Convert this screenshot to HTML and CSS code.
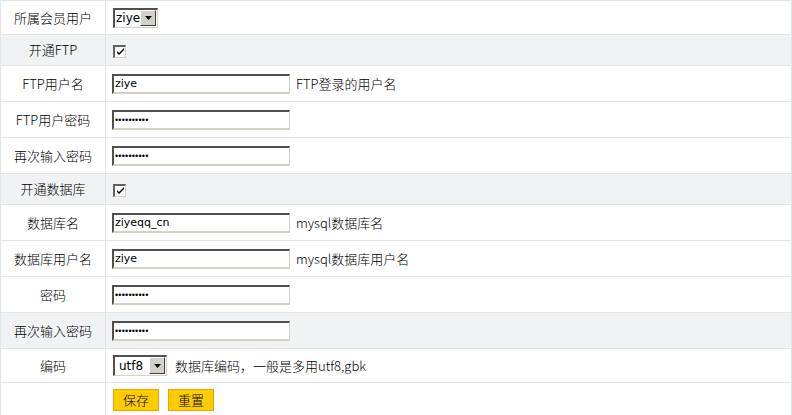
FILE: index.html
```html
<!DOCTYPE html>
<html lang="zh">
<head>
<meta charset="utf-8">
<title>FTP / 数据库设置</title>
<link rel="stylesheet" href="styles.css">
</head>
<body>
<form class="form">
<table class="grid">
  <colgroup><col class="col-label"><col></colgroup>
  <tr class="row-sel">
    <td class="label">所属会员用户</td>
    <td class="field">
      <span class="sel sel-user"><select><option>ziye</option></select><span class="arrow"><svg width="7" height="4" viewBox="0 0 7 4"><path d="M0 0h7L3.5 4z" fill="#000"/></svg></span></span>
    </td>
  </tr>
  <tr class="row-chk alt">
    <td class="label">开通FTP</td>
    <td class="field"><span class="chk"><svg width="9" height="9" viewBox="0 0 9 9"><path d="M1 4l2 2 5-5v2l-5 5-2-2z" fill="#000"/></svg></span></td>
  </tr>
  <tr class="row-inp">
    <td class="label">FTP用户名</td>
    <td class="field"><input class="txt" type="text" value="ziye"><span class="hint">FTP登录的用户名</span></td>
  </tr>
  <tr class="row-inp">
    <td class="label">FTP用户密码</td>
    <td class="field"><input class="txt pwd" type="password" value="ziyeqqcom1"></td>
  </tr>
  <tr class="row-inp">
    <td class="label">再次输入密码</td>
    <td class="field"><input class="txt pwd" type="password" value="ziyeqqcom1"></td>
  </tr>
  <tr class="row-chk alt">
    <td class="label">开通数据库</td>
    <td class="field"><span class="chk"><svg width="9" height="9" viewBox="0 0 9 9"><path d="M1 4l2 2 5-5v2l-5 5-2-2z" fill="#000"/></svg></span></td>
  </tr>
  <tr class="row-inp">
    <td class="label">数据库名</td>
    <td class="field"><input class="txt" type="text" value="ziyeqq_cn"><span class="hint">mysql数据库名</span></td>
  </tr>
  <tr class="row-inp">
    <td class="label">数据库用户名</td>
    <td class="field"><input class="txt" type="text" value="ziye"><span class="hint">mysql数据库用户名</span></td>
  </tr>
  <tr class="row-inp">
    <td class="label">密码</td>
    <td class="field"><input class="txt pwd" type="password" value="ziyeqqcom1"></td>
  </tr>
  <tr class="row-inp alt">
    <td class="label">再次输入密码</td>
    <td class="field"><input class="txt pwd" type="password" value="ziyeqqcom1"></td>
  </tr>
  <tr class="row-sel">
    <td class="label">编码</td>
    <td class="field">
      <span class="sel sel-enc"><select><option>utf8</option><option>gbk</option></select><span class="arrow"><svg width="7" height="4" viewBox="0 0 7 4"><path d="M0 0h7L3.5 4z" fill="#000"/></svg></span></span><span class="hint hint-enc">数据库编码，一般是多用utf8,gbk</span>
    </td>
  </tr>
  <tr class="row-btn">
    <td class="label"></td>
    <td class="field"><span class="btns"><button type="button" class="btn">保存</button><button type="reset" class="btn">重置</button></span></td>
  </tr>
</table>
</form>
</body>
</html>
```

FILE: styles.css
```css
html, body {
  margin: 0;
  padding: 0;
  background: #fff;
}
body {
  font-family: "Noto Sans CJK SC", "DejaVu Sans", sans-serif;
  font-size: 13px;
  font-weight: 300;
  color: #000;
  line-height: 16px;
}
.form { margin: 0; }
.grid {
  width: 792px;
  border-collapse: collapse;
  border: 1px solid #e1e4e8;
}
.col-label { width: 105px; }
.grid td {
  border: 1px solid #e1e4e8;
  padding: 0;
  vertical-align: middle;
}
.row-sel td { height: 33px; }
.row-chk td { height: 30px; }
.row-inp td { height: 35px; }
.row-btn td { height: 34px; }
.alt td { background: #f1f2f4; }
.label {
  text-align: center;
  white-space: nowrap;
}
.field {
  padding-left: 6px !important;
  white-space: nowrap;
}
.txt {
  box-sizing: border-box;
  width: 178px;
  height: 20px;
  margin: 0;
  padding: 0 1px;
  border-style: solid;
  border-width: 2px 1px 2px 2px;
  border-color: #505050 #d4d0c8 #d4d0c8 #505050;
  background: #fff;
  font-family: "DejaVu Sans", sans-serif;
  font-size: 11px;
  font-weight: 400;
  color: #000;
  vertical-align: middle;
  outline: none;
}
.pwd {
  font-family: "Liberation Sans", sans-serif;
  font-size: 9px;
  letter-spacing: 0.2px;
}
.hint {
  margin-left: 6px;
  vertical-align: middle;
}
.hint-enc { margin-left: 8px; }
.sel {
  display: inline-flex;
  box-sizing: border-box;
  height: 20px;
  border-style: solid;
  border-width: 2px 1px 1px 2px;
  border-color: #505050 #d4d0c8 #d4d0c8 #505050;
  background: #fff;
  vertical-align: middle;
}
.sel-user { width: 45px; margin-left: 1px; }
.sel-enc { width: 54px; height: 21px; margin-left: 1px; }
.sel select {
  appearance: none;
  -webkit-appearance: none;
  flex: 1;
  min-width: 0;
  margin: 0;
  padding: 0 0 0 1px;
  border: 0;
  background: transparent;
  font-family: "DejaVu Sans", sans-serif;
  font-size: 12px;
  font-weight: 400;
  color: #000;
  outline: none;
}
.sel-enc select { padding-left: 4px; }
.arrow {
  display: flex;
  align-items: center;
  justify-content: center;
  box-sizing: border-box;
  width: 16px;
  margin: 0 1px 1px 0;
  background: #d4d0c8;
  border-style: solid;
  border-width: 1px;
  border-color: #fff #404040 #404040 #fff;
}
.chk {
  display: inline-flex;
  align-items: center;
  justify-content: center;
  box-sizing: border-box;
  width: 13px;
  height: 13px;
  margin-left: 1px;
  background: #fff;
  border-style: solid;
  border-width: 2px 1px 1px 2px;
  border-color: #606060 #d4d0c8 #d4d0c8 #606060;
  vertical-align: middle;
}
.btns {
  display: inline-flex;
  gap: 9px;
  margin-left: 1px;
  vertical-align: middle;
}
.btn {
  box-sizing: border-box;
  width: 46px;
  height: 22px;
  margin: 0;
  padding: 0;
  background: #ffcc00;
  border: 1px solid #f5a000;
  font-family: "Noto Sans CJK SC", sans-serif;
  font-size: 13px;
  font-weight: 300;
  line-height: 18px;
  color: #000;
}
```
